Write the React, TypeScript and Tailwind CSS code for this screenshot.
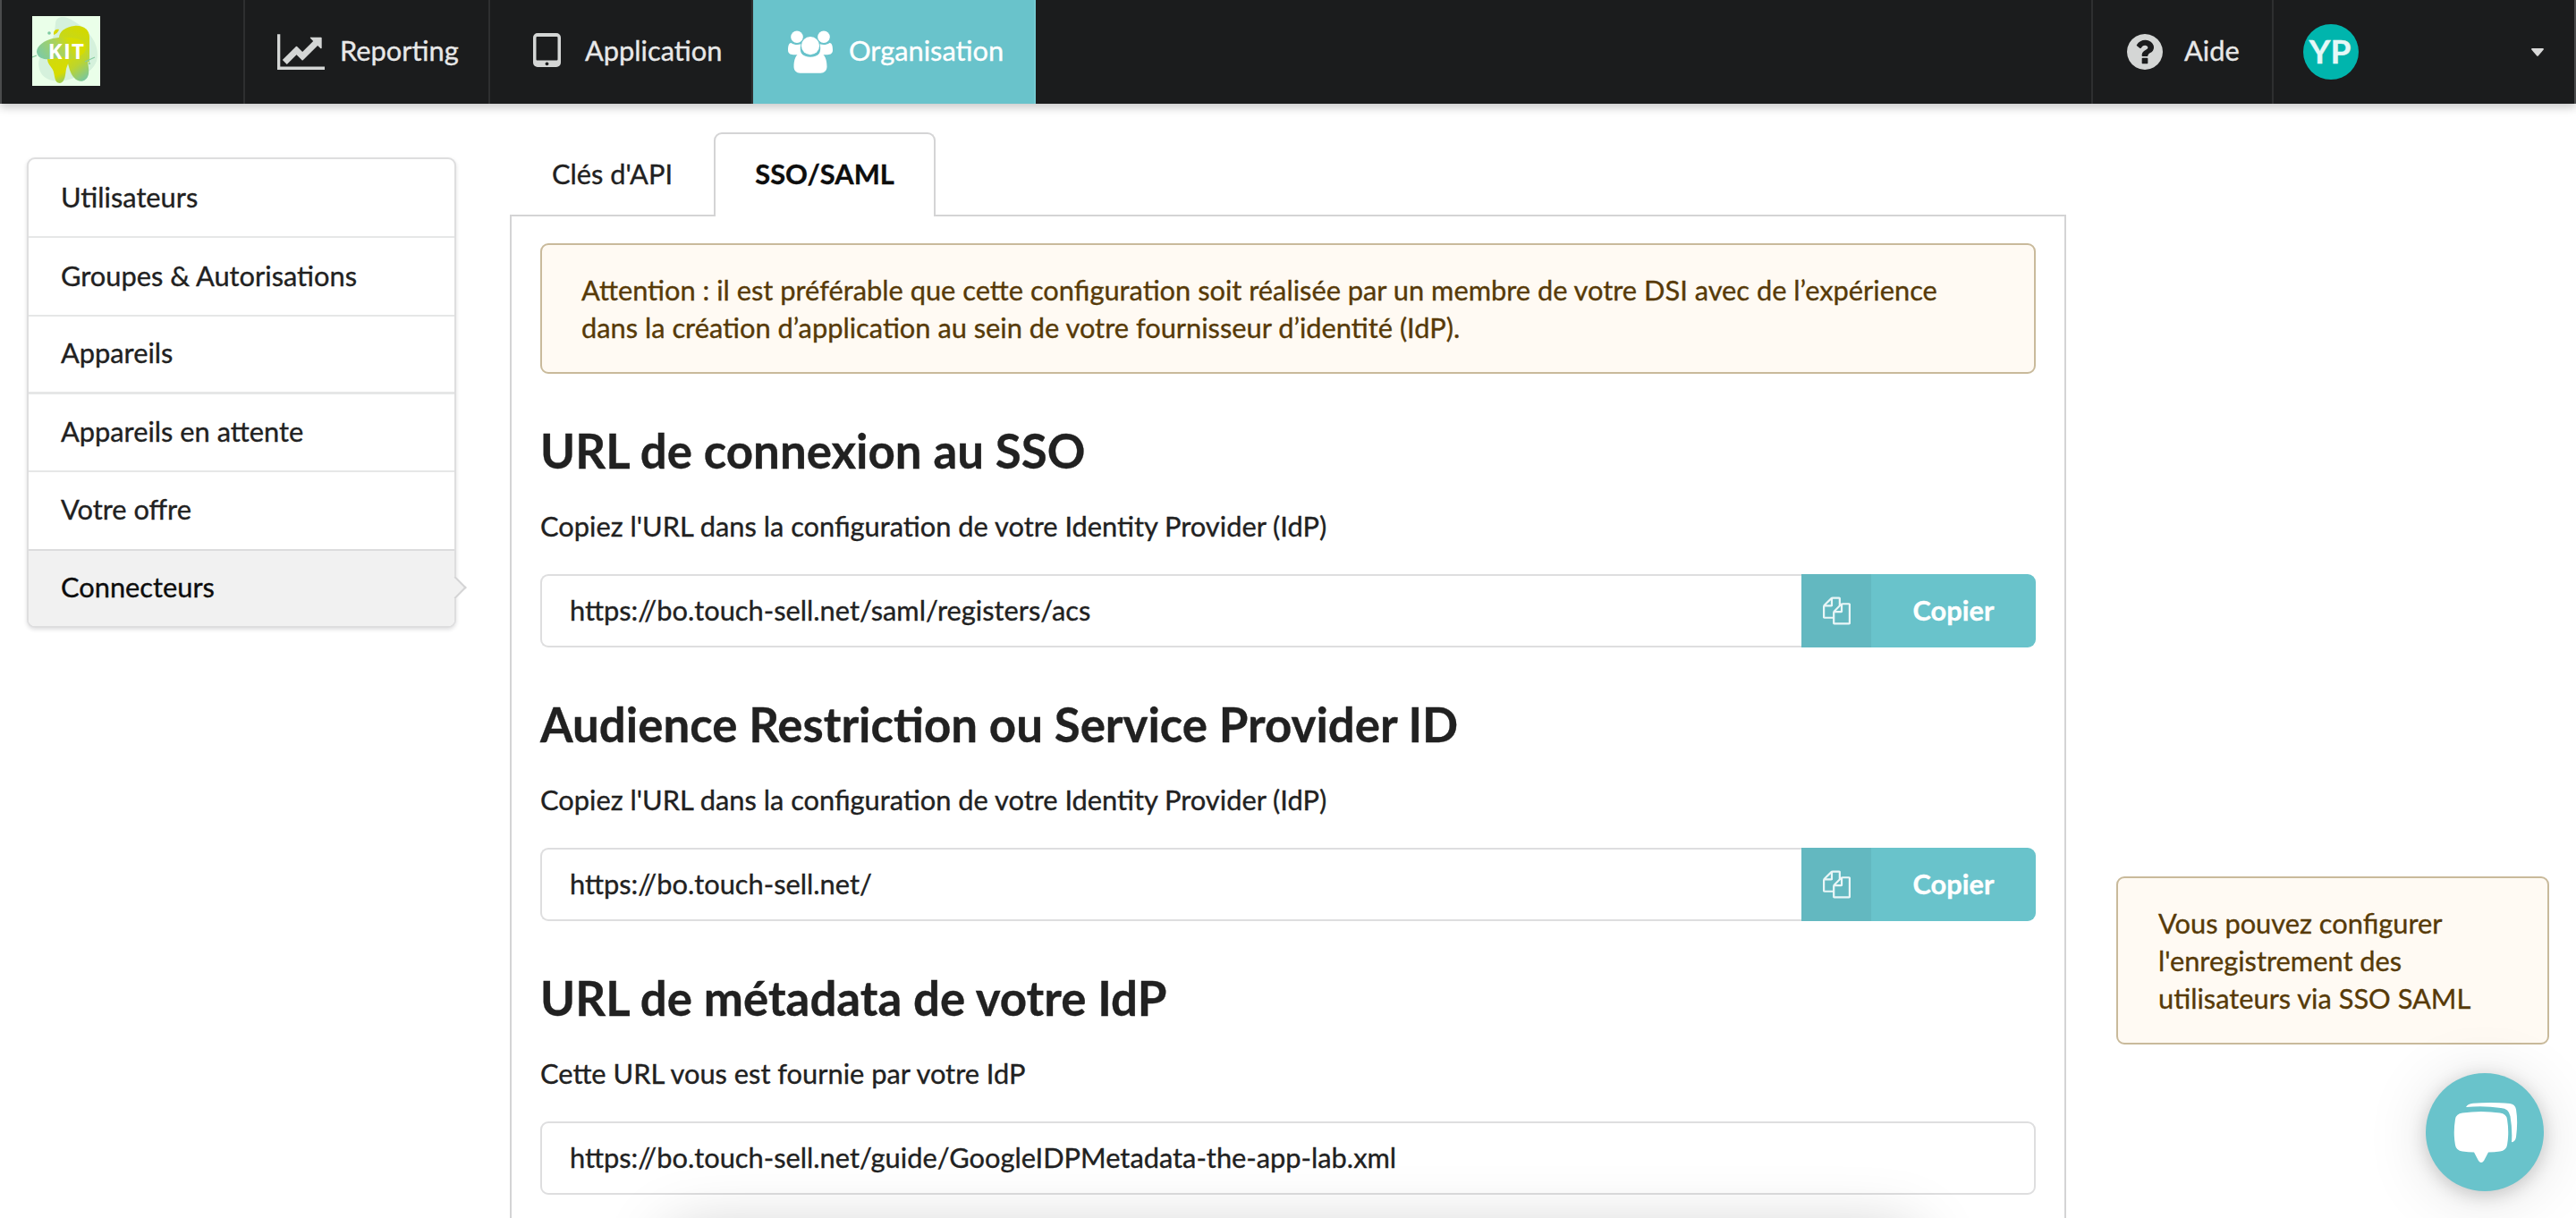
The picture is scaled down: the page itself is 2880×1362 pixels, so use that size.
import type { ReactNode } from "react";

const QUESTION =
  "M1024 1376v-192q0-14-9-23t-23-9h-192q-14 0-23 9t-9 23v192q0 14 9 23t23 9h192q14 0 23-9t9-23zM1280 704q0-88-55.5-163t-138.5-116-170-41q-243 0-371 213-15 24 8 42l132 100q7 6 19 6 16 0 25-12 53-68 86-92 34-24 86-24 48 0 85.5 26t37.5 59q0 38-20 61t-68 45q-63 28-115.5 86.5t-52.5 125.5v36q0 14 9 23t23 9h192q14 0 23-9t9-23q0-19 21.5-49.5t54.5-49.5q32-18 49-28.5t46-35 44.5-48 28-60.5 12.5-81zM1664 896q0 209-103 385.5t-279.5 279.5-385.5 103-385.5-103-279.5-279.5-103-385.5 103-385.5 279.5-279.5 385.5-103 385.5 103 279.5 279.5 103 385.5z";
const FILES =
  "M1696 384q40 0 68 28t28 68v1216q0 40-28 68t-68 28h-960q-40 0-68-28t-28-68v-288h-544q-40 0-68-28t-28-68v-672q0-40 20-88t48-76l408-408q28-28 76-48t88-20h416q40 0 68 28t28 68v328q68-40 128-40h416zm-544 213l-299 299h299v-299zm-640-384l-299 299h299v-299zm196 647l316-316v-416h-384v416q0 40-28 68t-68 28h-416v640h512v-256q0-40 20-88t48-76zm956 804v-1152h-384v416q0 40-28 68t-68 28h-416v640h896z";
const LINE_CHART =
  "M2048 1536v128h-2048v-1536h128v1408h1920zM1920 288v435q0 21-19.5 29.5t-35.5-7.5l-121-121-633 633q-10 10-23 10t-23-10l-233-233-416 416-192-192 585-585q10-10 23-10t23 10l233 233 464-464-121-121q-16-16-7.5-35.5t29.5-8.5h435q14 0 23 9t9 23z";

function Logo() {
  return (
    <svg viewBox="0 0 76 78" className="block h-[78px] w-[76px] [-webkit-text-stroke:0]">
      <defs>
        <linearGradient id="lobeTop" x1="0.1" y1="1" x2="0.5" y2="0">
          <stop offset="0" stopColor="#8fcf93" />
          <stop offset="0.6" stopColor="#c6d81c" />
          <stop offset="1" stopColor="#d2d900" />
        </linearGradient>
        <linearGradient id="lobeLeft" x1="0" y1="0.6" x2="1" y2="0.3">
          <stop offset="0" stopColor="#7ecaa2" />
          <stop offset="0.45" stopColor="#a9d25c" />
          <stop offset="0.75" stopColor="#d6dc00" />
        </linearGradient>
        <linearGradient id="legRight" x1="0.2" y1="0" x2="0.7" y2="1">
          <stop offset="0" stopColor="#d8dc00" />
          <stop offset="0.5" stopColor="#bdd52c" />
          <stop offset="1" stopColor="#7cc79c" />
        </linearGradient>
        <linearGradient id="legLeft" x1="0" y1="0" x2="0.4" y2="1">
          <stop offset="0" stopColor="#d0da10" />
          <stop offset="0.75" stopColor="#d6dc00" />
          <stop offset="1" stopColor="#a5d04a" />
        </linearGradient>
      </defs>
      <rect width="76" height="78" fill="#eaffe9" />
      <path d="M26 8C27-2 39 0 47 6c12 7 26 20 26 37 0 15-12 22-26 26-15 6-33 5-38-7C4 50 10 42 18 34c6-8 7-16 8-26z" fill="#d5f1dc" />
      <path d="M30 24c0-7 8-12 17-13 10-1 17 4 17 13v28L46 40z" fill="url(#lobeTop)" />
      <path d="M44 38c8-4 18-1 18 9 0 7 2 13 1 18-2 9-11 10-16 4-5-5-6-13-8-20z" fill="url(#legRight)" />
      <path d="M5 40c0-7 9-13 18-15 10-2 24-2 32 2 8 5 6 14-1 17-7 4-18 6-29 4C14 49 6 48 5 40z" fill="url(#lobeLeft)" />
      <path d="M17 48c7 1 15-4 21-2 5 2 2 7 0 13-1 6-1 15-7 16-7 0-5-9-8-15-2-4-6-7-6-12z" fill="url(#legLeft)" />
      <path d="M24 19c0-3 3-5 6-4-1 3-3 5-6 6z" fill="#d9d800" />
      <circle cx="19" cy="19" r="1.8" fill="#7ecaa2" />
      <path d="M0 46l5-2M59 51l11-5" stroke="#86cba0" strokeWidth="1.3" />
      <circle cx="64" cy="53" r="1" fill="#86cba0" />
      <text x="38.5" y="48" textAnchor="middle" fontFamily="Open Sans, sans-serif" fontWeight="700" fontSize="24" letterSpacing="1.2" fill="#fff">
        KIT
      </text>
    </svg>
  );
}

function Tablet() {
  return (
    <svg viewBox="0 0 31 38" className="block h-[38px] w-[31px]" fill="#d4d6d5">
      <path
        fillRule="evenodd"
        d="M5 0h21a5 5 0 0 1 5 5v28a5 5 0 0 1-5 5H5a5 5 0 0 1-5-5V5a5 5 0 0 1 5-5zM4.500 4a1 1 0 0 0-1 1v24.500a1 1 0 0 0 1 1h22a1 1 0 0 0 1-1V5a1 1 0 0 0-1-1zM15.500 32.500a1.900 1.900 0 1 0 .01 0z"
      />
    </svg>
  );
}

function Users() {
  return (
    <svg viewBox="0 0 50 48" className="block h-[48px] w-[50px]" fill="#fff">
      <circle cx="10" cy="7.200" r="6.800" />
      <circle cx="40" cy="7.200" r="6.800" />
      <path d="M0 22c0-5 1-8 3.500-8 2 1.500 4.500 2 6.500 2 1.500 0 3-.3 4.500-.8-1.500 5-.5 9.500 1.500 12H6c-4 0-6-2-6-5.200z" />
      <path d="M50 22c0-5-1-8-3.500-8-2 1.500-4.500 2-6.500 2-1.500 0-3-.3-4.500-.8 1.500 5 .5 9.500-1.500 12h10c4 0 6-2 6-5.200z" />
      <circle cx="25" cy="17.200" r="10.100" />
      <path d="M14.500 25.500c3 3 6.500 4.300 10.500 4.300s7.500-1.300 10.500-4.300c6 0 8 8 8 15 0 4.500-3 7.200-7 7.200h-23c-4 0-7-2.700-7-7.200 0-7 2-15 8-15z" />
    </svg>
  );
}

function NavItem({ icon, label, className }: { icon: ReactNode; label: string; className: string }) {
  return (
    <a className={"flex h-full items-center border-r-2 " + className}>
      {icon}
      <span className="pb-[2px]">{label}</span>
    </a>
  );
}

function Header() {
  return (
    <header className="flex h-[116px] shrink-0 border-x-2 border-[#4b4c4d] bg-[#1b1c1d] text-[#e8e8e8] shadow-[0_4px_10px_rgba(0,0,0,0.22)]">
      <a className="flex h-full w-[272px] items-start border-r-2 border-[#2e2f30] pt-[18px] pl-[34px]">
        <Logo />
      </a>
      <NavItem
        className="w-[274px] border-[#2e2f30] gap-[17px] pl-[36px]"
        label="Reporting"
        icon={
          <svg viewBox="0 128 2048 1536" className="block h-[40px] w-[53px]" fill="#d4d6d5">
            <path d={LINE_CHART} />
          </svg>
        }
      />
      <NavItem className="w-[294px] border-[#2e2f30] gap-[27px] pl-[48px]" label="Application" icon={<div className="-mt-[4px]"><Tablet /></div>} />
      <NavItem className="w-[316px] border-[#74cad1] bg-[#69c3cb] gap-[18px] pl-[39px] text-white" label="Organisation" icon={<Users />} />
      <div className="flex-1 border-r-2 border-[#2e2f30]" />
      <NavItem
        className="w-[202px] border-[#2e2f30] gap-[24px] pl-[38px]"
        label="Aide"
        icon={
          <svg viewBox="128 128 1536 1536" className="block h-[40px] w-[40px]" fill="#d4d6d5">
            <path d={QUESTION} />
          </svg>
        }
      />
      <div className="flex w-[336px] items-center justify-between pr-[34px] pl-[33px]">
        <div className="flex h-[62px] w-[62px] items-center justify-center rounded-full bg-[#00b5ad] pr-[2px] pb-[3px] text-[37px] font-bold text-[#e6f8f7]">YP</div>
        <svg viewBox="0 0 14 9" className="h-[9px] w-[14px]" fill="#d8d8d8">
          <path d="M1 0h12q1.500 .5.500 1.800L8 8.200q-1 1-2 0L.5 1.800Q-.5.5 1 0z" />
        </svg>
      </div>
    </header>
  );
}

function Sidebar() {
  const row = "flex items-center pl-[36px] border-[#e6e7e7]";
  return (
    <nav className="mt-[60px] ml-[30px] h-[526px] w-[480px] shrink-0 rounded-[9px] border-2 border-[#dededf] bg-white shadow-[0_2px_4px_rgba(34,36,38,0.15)]">
      <a className={row + " h-[88px] border-b-2"}>Utilisateurs</a>
      <a className={row + " h-[88px] border-b-2"}>Groupes &amp; Autorisations</a>
      <a className={row + " h-[87px] border-b-[3px] pb-[2px]"}>Appareils</a>
      <a className={row + " h-[87px] border-b-2 pb-[2px]"}>Appareils en attente</a>
      <a className={row + " h-[86px] border-b-0 pb-[3px]"}>Votre offre</a>
      <a className="relative flex h-[86px] items-center rounded-b-[7px] border-t-2 border-[#dcdcdd] bg-[#f1f1f1] pb-[2px] pl-[36px] text-[#0d0d0d]">
        Connecteurs
        <span className="absolute top-[32px] -right-[10px] h-[18px] w-[18px] rotate-45 border-t-2 border-r-2 border-[#d4d4d5] bg-[#f1f1f1]" />
      </a>
    </nav>
  );
}

function Field({ title, hint, value, copy }: { title: string; hint: string; value: string; copy?: boolean }) {
  return (
    <section className="h-[306px]">
      <h2 className="h-[68px] text-[52.8px] leading-[68px] font-bold">{title}</h2>
      <p className="mt-[30px] h-[42px]">{hint}</p>
      <div className="mt-[32px] flex h-[82px]">
        <div
          className={
            copy
              ? "flex flex-1 items-center rounded-l-[9px] border-2 border-r-0 border-[#dededf] pl-[31px]"
              : "flex flex-1 items-center rounded-[9px] border-2 border-[#dededf] pl-[31px]"
          }
        >
          {value}
        </div>
        {copy && (
          <button className="flex w-[262px] overflow-hidden rounded-r-[9px] bg-[#69c3cb] font-bold text-white">
            <span className="flex h-full w-[78px] items-center justify-center bg-[#63b8c0]">
              <svg viewBox="0 0 1792 1792" className="h-[32px] w-[31px] text-[#eaf6f7]" fill="currentColor">
                <path d={FILES} />
              </svg>
            </span>
            <span className="flex h-full flex-1 items-center justify-center">Copier</span>
          </button>
        )}
      </div>
    </section>
  );
}

export default function App() {
  return (
    <div className="relative flex h-[1362px] w-[2880px] flex-col overflow-hidden bg-white font-['Lato',sans-serif] text-[30.8px] leading-[42px] text-[#212121] [-webkit-text-stroke:0.35px_currentColor]">
      <Header />
      <div className="flex flex-1 items-start">
        <Sidebar />
        <main className="mt-[32px] ml-[60px] w-[1740px] shrink-0">
          <div className="flex h-[94px]">
            <a className="flex w-[228px] items-center border-b-2 border-[#d4d4d5] pt-[2px] pl-[47px]">Clés d'API</a>
            <a className="flex w-[248px] items-center justify-center rounded-t-[9px] border-2 border-b-0 border-[#d4d4d5] pb-[2px] font-bold text-[#0d0d0d]">SSO/SAML</a>
            <div className="flex-1 border-b-2 border-[#d4d4d5]" />
          </div>
          <div className="h-[1130px] border-x-2 border-[#d4d4d5] px-[32px] pt-[30px]">
            <div className="mb-[52px] h-[146px] rounded-[9px] border-2 border-[#c9ba9b] bg-[#fffaf3] pt-[30px] pl-[44px] text-[#573a08]">
              <p>Attention : il est préférable que cette configuration soit réalisée par un membre de votre DSI avec de l’expérience</p>
              <p>dans la création d’application au sein de votre fournisseur d’identité (IdP).</p>
            </div>
            <Field title="URL de connexion au SSO" hint="Copiez l'URL dans la configuration de votre Identity Provider (IdP)" value="https://bo.touch-sell.net/saml/registers/acs" copy />
            <Field title="Audience Restriction ou Service Provider ID" hint="Copiez l'URL dans la configuration de votre Identity Provider (IdP)" value="https://bo.touch-sell.net/" copy />
            <Field title="URL de métadata de votre IdP" hint="Cette URL vous est fournie par votre IdP" value="https://bo.touch-sell.net/guide/GoogleIDPMetadata-the-app-lab.xml" />
          </div>
        </main>
        <aside className="mt-[864px] ml-[56px] h-[188px] w-[484px] rounded-[9px] border-2 border-[#c9ba9b] bg-[#fffaf3] pt-[30px] pl-[45px] text-[#573a08]">
          <p>Vous pouvez configurer</p>
          <p>l'enregistrement des</p>
          <p>utilisateurs via SSO SAML</p>
        </aside>
      </div>

      <div className="pointer-events-none absolute top-[1380px] left-[750px] h-[200px] w-[1390px] shadow-[0_0_76px_rgba(0,0,0,0.23)]" />

      <button className="absolute right-[36px] bottom-[30px] h-[132px] w-[132px] rounded-full bg-[#69c3cb] shadow-[0_4px_20px_rgba(0,0,0,0.18),0_6px_70px_rgba(0,0,0,0.13)]">
        <svg viewBox="0 0 132 132" className="h-[132px] w-[132px]" fill="#fff">
          <path d="M41 44.500q21-3 42 0 7 .8 8 7 2.500 15 0 29-1 6-8 7-6 .8-13 1l-5 9.500q-3 4-6 0l-5-9.500q-6-.2-13-1-7-1-8-7-2.500-14 0-29 1-6.200 8-7z" />
          <path d="M45 38q2-4 8-4.300 21-1.500 41 .3 6 .7 7 6.500 2.300 14 0 31-.8 5-5 5.800 1-14-1.500-29Q93 39.500 84 39 65 36 45 38z" />
        </svg>
      </button>
    </div>
  );
}
